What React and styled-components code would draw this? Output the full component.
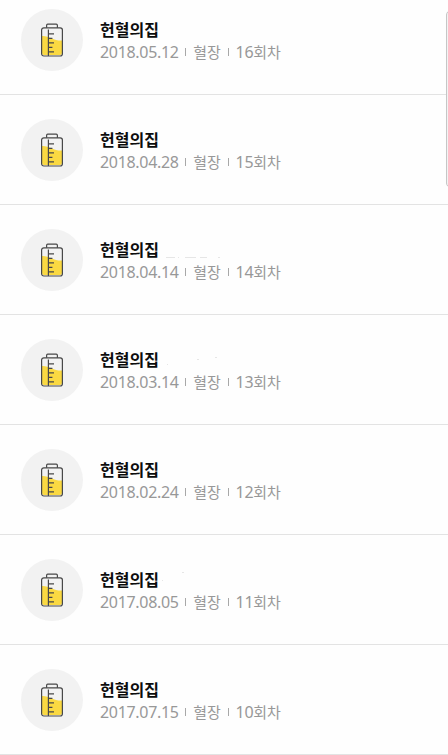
import React from "react";
import styled, { createGlobalStyle } from "styled-components";

const GlobalStyle = createGlobalStyle`
  body {
    margin: 0;
    background: #fefefe;
  }
`;

const Screen = styled.div`
  position: relative;
  height: 755px;
  overflow: hidden;
  background: #fefefe;
  font-family: "Noto Sans", "Noto Sans CJK KR", sans-serif;
`;

const List = styled.ul`
  list-style: none;
  margin: -15px 0 0;
  padding: 0;
`;

const Row = styled.li`
  position: relative;
  box-sizing: border-box;
  height: 110px;
  display: flex;
  align-items: center;
  padding-left: 21px;
  border-bottom: 1px solid #e3e3e3;
`;

const IconCircle = styled.div`
  width: 62px;
  height: 62px;
  flex: none;
  display: flex;
  align-items: center;
  justify-content: center;
  border-radius: 50%;
  background: #f2f2f2;
`;

const Info = styled.div`
  margin-left: 17px;
  padding-top: 2px;
`;

const Place = styled.p`
  margin: 0;
  font-family: "Noto Sans CJK KR", sans-serif;
  font-size: 16px;
  font-weight: 700;
  line-height: 22px;
  color: #0c0c0c;
`;

const Detail = styled.p`
  margin: 0;
  padding-top: 1px;
  display: flex;
  align-items: center;
  font-size: 15px;
  line-height: 22px;
  color: #989898;
`;

const Digits = styled.span`
  font-size: 16px;
  letter-spacing: -0.32px;
`;

const Bar = styled.span`
  width: 1px;
  height: 8px;
  margin: 0 7px 0 6.7px;
  background: #a8a8a8;
`;

const Marks = styled.svg`
  position: absolute;
  left: 160px;
  top: 34px;
`;

const ScrollThumb = styled.div`
  position: absolute;
  top: 10px;
  left: 446px;
  box-sizing: border-box;
  width: 10px;
  height: 178px;
  border: 1px solid #c6c6c6;
  border-radius: 5px;
  background: #f3f3f3;
`;

const donations = [
  { date: "2018.05.12", count: 16 },
  { date: "2018.04.28", count: 15 },
  { date: "2018.04.14", count: 14, marks: "M6 18.5h9M18 18.5h1M25 18.5h11M40 18.5h7M58 18.5h2" },
  { date: "2018.03.14", count: 13, marks: "M37 10.5h2M55 8.5h2M7 15.5h1" },
  { date: "2018.02.24", count: 12 },
  { date: "2017.08.05", count: 11, marks: "M2 11.5h1M22 3.5h2" },
  { date: "2017.07.15", count: 10 }
];

const PlasmaBag = () => (
  <svg width="24" height="34" viewBox="0 0 24 34" fill="none">
    <path d="M2 13C9 12.6 14 18 22 17.6V30a2 2 0 0 1-2 2H4a2 2 0 0 1-2-2Z" fill="#fad942" />
    <g stroke="#484848" strokeWidth="1.2">
      <rect x="1.6" y="4.8" width="20.8" height="28.2" rx="2.2" />
      <path d="M6.6 4.8V2.4Q6.6 1.2 7.8 1.2h8.4Q17.4 1.2 17.4 2.4v2.4M8.4 6.5v26.5M8.4 10.8H14M8.4 15.4h4M8.4 19.8H14M8.4 24.4h4M8.4 28.8H14" />
    </g>
  </svg>
);

const DonationRow = ({ date, count, marks }) => (
  <Row>
    <IconCircle>
      <PlasmaBag />
    </IconCircle>
    <Info>
      <Place>헌혈의집</Place>
      <Detail>
        <Digits>{date}</Digits>
        <Bar />
        혈장
        <Bar />
        <Digits>{count}</Digits>
        회차
      </Detail>
    </Info>
    {marks && (
      <Marks width="64" height="24">
        <path d={marks} stroke="#e6e6e6" />
      </Marks>
    )}
  </Row>
);

export default function App() {
  return (
    <Screen>
      <GlobalStyle />
      <List>
        {donations.map(item => (
          <DonationRow key={item.date} {...item} />
        ))}
      </List>
      <ScrollThumb />
    </Screen>
  );
}
